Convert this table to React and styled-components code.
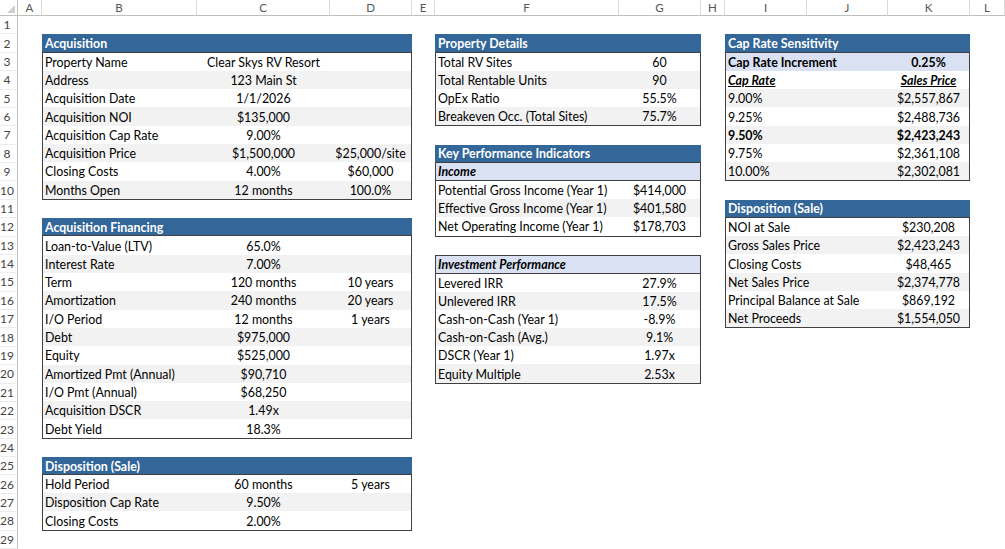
import React from 'react'
import styled, { createGlobalStyle } from 'styled-components'

const GlobalStyle = createGlobalStyle`
  html, body {
    margin: 0;
    padding: 0;
    background: #fff;
  }
  body {
    font-family: Lato, "Liberation Sans", sans-serif;
    color: #000;
  }
`

const LETTERS = ['A', 'B', 'C', 'D', 'E', 'F', 'G', 'H', 'I', 'J', 'K', 'L']

const BLUE = '#336699'
const LIGHT = '#d9e1f2'
const BAND = '#f2f2f2'
const LINE = '#404040'

const Sheet = styled.div`
  display: grid;
  width: 1005px;
  height: 549px;
  overflow: hidden;
  grid-template-columns: 18px 24px 155px 133px 82px 23px 184px 82px 24px 82px 81px 82px 1fr;
  grid-template-rows: 16px repeat(29, 1fr);
`

const Corner = styled.div`
  position: relative;
  border-right: 1px solid #bfbfbf;
  border-bottom: 1px solid #bfbfbf;
  background: #fff;

  &::after {
    content: '';
    position: absolute;
    right: 2px;
    bottom: 2px;
    border-left: 8px solid transparent;
    border-bottom: 8px solid #d0d0d0;
  }
`

const ColHead = styled.div`
  display: flex;
  align-items: center;
  justify-content: center;
  font-size: 11.5px;
  color: #555;
  border-right: 1px solid #dadada;
  border-bottom: 1px solid #bfbfbf;
`

const RowHead = styled.div`
  grid-column: 1;
  grid-row: ${p => p.$row};
  display: flex;
  align-items: center;
  justify-content: center;
  padding-right: 3px;
  font-size: 12px;
  color: #444;
  border-right: 1px solid #bfbfbf;
  border-bottom: 1px solid #ececec;
`

const Table = styled.div`
  grid-column: ${p => p.$col};
  grid-row: ${p => p.$row};
  display: grid;
  grid-template-columns: ${p => p.$cols};
  grid-auto-rows: 1fr;
  border: 1px solid ${LINE};
  border-top: ${p => (p.$titled ? 'none' : `1px solid ${LINE}`)};
  font-size: 12.4px;
`

const Row = styled.div`
  grid-column: 1 / -1;
  display: grid;
  grid-template-columns: subgrid;
  align-items: center;
  background: ${p => p.$bg};
  border-bottom: ${p => (p.$line ? `1px solid ${LINE}` : 'none')};
`

const TitleRow = styled(Row)`
  margin: 0 -1px;
  padding: 0 1px;
  background: ${BLUE};
  color: #fff;
  font-weight: 700;
  border-bottom: 1px solid ${LINE};
`

const Cell = styled.div`
  padding: 1px 2px 0;
  white-space: nowrap;
  text-align: ${p => p.$align};
  font-weight: ${p => (p.$bold ? 700 : 400)};
  font-style: ${p => (p.$italic ? 'italic' : 'normal')};
  text-decoration: ${p => (p.$under ? 'underline' : 'none')};
`

const tables = [
  {
    col: '3 / 6', row: '3 / span 9', cols: '154px 133px 1fr', title: 'Acquisition',
    rows: [
      { cells: ['Property Name', 'Clear Skys RV Resort', ''] },
      { cells: ['Address', '123 Main St', ''] },
      { cells: ['Acquisition Date', '1/1/2026', ''] },
      { cells: ['Acquisition NOI', '$135,000', ''] },
      { cells: ['Acquisition Cap Rate', '9.00%', ''] },
      { cells: ['Acquisition Price', '$1,500,000', '$25,000/site'] },
      { cells: ['Closing Costs', '4.00%', '$60,000'] },
      { cells: ['Months Open', '12 months', '100.0%'] },
    ],
  },
  {
    col: '3 / 6', row: '13 / span 12', cols: '154px 133px 1fr', title: 'Acquisition Financing',
    rows: [
      { cells: ['Loan-to-Value (LTV)', '65.0%', ''] },
      { cells: ['Interest Rate', '7.00%', ''] },
      { cells: ['Term', '120 months', '10 years'] },
      { cells: ['Amortization', '240 months', '20 years'] },
      { cells: ['I/O Period', '12 months', '1 years'] },
      { cells: ['Debt', '$975,000', ''] },
      { cells: ['Equity', '$525,000', ''] },
      { cells: ['Amortized Pmt (Annual)', '$90,710', ''] },
      { cells: ['I/O Pmt (Annual)', '$68,250', ''] },
      { cells: ['Acquisition DSCR', '1.49x', ''] },
      { cells: ['Debt Yield', '18.3%', ''] },
    ],
  },
  {
    col: '3 / 6', row: '26 / span 4', cols: '154px 133px 1fr', title: 'Disposition (Sale)',
    rows: [
      { cells: ['Hold Period', '60 months', '5 years'] },
      { cells: ['Disposition Cap Rate', '9.50%', ''] },
      { cells: ['Closing Costs', '2.00%', ''] },
    ],
  },
  {
    col: '7 / 9', row: '3 / span 5', cols: '183px 1fr', title: 'Property Details',
    rows: [
      { cells: ['Total RV Sites', '60'] },
      { cells: ['Total Rentable Units', '90'] },
      { cells: ['OpEx Ratio', '55.5%'] },
      { cells: ['Breakeven Occ. (Total Sites)', '75.7%'] },
    ],
  },
  {
    col: '7 / 9', row: '9 / span 5', cols: '183px 1fr', title: 'Key Performance Indicators',
    rows: [
      { cells: ['Income', ''], sub: true, italic: true, line: true },
      { cells: ['Potential Gross Income (Year 1)', '$414,000'] },
      { cells: ['Effective Gross Income (Year 1)', '$401,580'] },
      { cells: ['Net Operating Income (Year 1)', '$178,703'] },
    ],
  },
  {
    col: '7 / 9', row: '15 / span 7', cols: '183px 1fr',
    rows: [
      { cells: ['Investment Performance', ''], sub: true, italic: true, line: true },
      { cells: ['Levered IRR', '27.9%'] },
      { cells: ['Unlevered IRR', '17.5%'] },
      { cells: ['Cash-on-Cash (Year 1)', '-8.9%'] },
      { cells: ['Cash-on-Cash (Avg.)', '9.1%'] },
      { cells: ['DSCR (Year 1)', '1.97x'] },
      { cells: ['Equity Multiple', '2.53x'] },
    ],
  },
  {
    col: '10 / 13', row: '3 / span 8', cols: '81px 81px 1fr', title: 'Cap Rate Sensitivity',
    rows: [
      { cells: ['Cap Rate Increment', '', '0.25%'], sub: true, bold: true },
      { cells: ['Cap Rate', '', 'Sales Price'], bold: true, italic: true, under: true },
      { cells: ['9.00%', '', '$2,557,867'] },
      { cells: ['9.25%', '', '$2,488,736'] },
      { cells: ['9.50%', '', '$2,423,243'], bold: true },
      { cells: ['9.75%', '', '$2,361,108'] },
      { cells: ['10.00%', '', '$2,302,081'] },
    ],
  },
  {
    col: '10 / 13', row: '12 / span 7', cols: '81px 81px 1fr', title: 'Disposition (Sale)',
    rows: [
      { cells: ['NOI at Sale', '', '$230,208'] },
      { cells: ['Gross Sales Price', '', '$2,423,243'] },
      { cells: ['Closing Costs', '', '$48,465'] },
      { cells: ['Net Sales Price', '', '$2,374,778'] },
      { cells: ['Principal Balance at Sale', '', '$869,192'] },
      { cells: ['Net Proceeds', '', '$1,554,050'] },
    ],
  },
]

function DataTable({ t }) {
  let band = 0
  return (
    <Table $col={t.col} $row={t.row} $cols={t.cols} $titled={!!t.title}>
      {t.title && (
        <TitleRow>
          <Cell $align="left" $bold>{t.title}</Cell>
        </TitleRow>
      )}
      {t.rows.map((r, i) => {
        let bg
        if (r.sub) {
          bg = LIGHT
          band = 0
        } else {
          bg = band % 2 ? BAND : '#fff'
          band++
        }
        return (
          <Row key={i} $bg={bg} $line={r.line}>
            {r.cells.map((c, j) => (
              <Cell
                key={j}
                $align={j === 0 ? 'left' : 'center'}
                $bold={r.bold || (r.sub && j === 0)}
                $italic={r.italic}
                $under={r.under}
              >
                {c}
              </Cell>
            ))}
          </Row>
        )
      })}
    </Table>
  )
}

export default function App() {
  return (
    <>
      <GlobalStyle />
      <Sheet>
        <Corner />
        {LETTERS.map(l => (
          <ColHead key={l}>{l}</ColHead>
        ))}
        {Array.from({ length: 29 }, (_, i) => (
          <RowHead key={i} $row={i + 2}>{i + 1}</RowHead>
        ))}
        {tables.map((t, i) => (
          <DataTable key={i} t={t} />
        ))}
      </Sheet>
    </>
  )
}
